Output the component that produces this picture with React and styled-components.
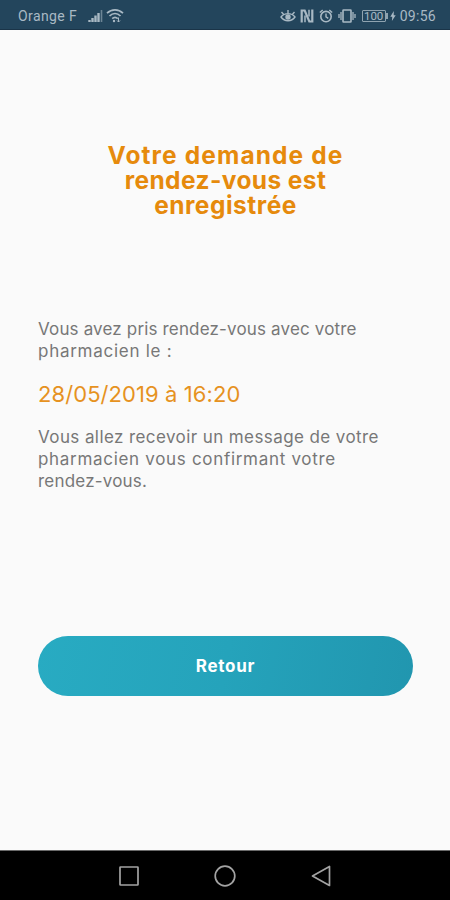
import React from 'react';
import styled, { createGlobalStyle } from 'styled-components';

const GlobalStyle = createGlobalStyle`
  * {
    box-sizing: border-box;
  }

  body {
    margin: 0;
    background: #fafafa;
  }
`;

const Screen = styled.div`
  display: flex;
  flex-direction: column;
  width: 450px;
  height: 900px;
  overflow: hidden;
  background: #fafafa;
  font-family: 'Inter', 'Open Sans', sans-serif;
`;

const StatusBar = styled.header`
  display: flex;
  align-items: center;
  justify-content: space-between;
  flex: none;
  height: 30px;
  padding: 2px 14px 0 18px;
  background: #23455c;
  border-bottom: 1px solid #1a3448;
  color: #a9b9c4;
  font-family: 'Roboto', sans-serif;
  font-size: 14px;
`;

const StatusGroup = styled.div`
  display: flex;
  align-items: center;
  height: 28px;
`;

const StatusText = styled.span`
  margin-left: ${(props) => props.$gap || '0'};
  line-height: 28px;
  letter-spacing: ${(props) => props.$spacing || '0'};
  white-space: nowrap;
`;

const StatusIcon = styled.svg`
  display: block;
  flex: none;
  margin-left: ${(props) => props.$gap || '0'};
  fill: none;
  stroke: currentColor;
  stroke-width: 1.4;
`;

const Battery = styled.span`
  display: flex;
  align-items: center;
  justify-content: center;
  position: relative;
  width: 24px;
  height: 12px;
  margin-left: 6px;
  border: 1px solid #8fa3b0;
  border-radius: 1px;
  font-size: 11.5px;
  line-height: 10px;

  &::after {
    content: '';
    position: absolute;
    top: 2px;
    right: -3px;
    width: 2px;
    height: 6px;
    background: #8fa3b0;
  }
`;

const Content = styled.main`
  flex: 1;
  display: flex;
  flex-direction: column;
  padding: 113px 37px 0 38px;
`;

const Title = styled.h1`
  margin: 0;
  color: #e68a0c;
  font-size: 24.5px;
  font-weight: 700;
  line-height: 25px;
  text-align: center;
`;

const Message = styled.p`
  margin: ${(props) => props.$top} 0 0;
  color: #777777;
  font-size: 17px;
  font-weight: 400;
  line-height: 21.7px;
`;

const Line = styled.span`
  display: block;
  letter-spacing: ${(props) => props.$spacing || '0'};
  white-space: nowrap;
`;

const Appointment = styled.p`
  margin: 18px 0 0;
  color: #e6921f;
  font-size: 22px;
  line-height: 28px;
`;

const BackButton = styled.button`
  flex: none;
  height: 60px;
  margin-top: 143px;
  padding: 1px 0 0;
  border: none;
  border-radius: 30px;
  background: linear-gradient(100deg, #28abc2 0%, #25a3bb 50%, #2196af 100%);
  color: #ffffff;
  font-family: inherit;
  font-size: 17px;
  font-weight: 700;
  letter-spacing: 0.7px;
`;

const NavBar = styled.nav`
  display: flex;
  align-items: center;
  justify-content: center;
  flex: none;
  gap: 72px;
  height: 50px;
  border-top: 1px solid #6a6a6a;
  background: #000000;
  color: #a3a3a3;
`;

const NavIcon = styled.svg`
  display: block;
  fill: none;
  stroke: currentColor;
  stroke-width: 1.7;
  stroke-linejoin: round;
`;

const SignalIcon = () => (
  <StatusIcon width="15" height="14" viewBox="0 0 15 14" $gap="11px">
    <path d="M1.5 11v2M4.5 9v4M7.5 6.5V13M10.5 4v9" strokeWidth="2.4" />
    <path d="M13.5 1v12" strokeWidth="1.6" opacity="0.55" />
  </StatusIcon>
);

const WifiIcon = () => (
  <StatusIcon width="18" height="15" viewBox="0 0 18 15" $gap="3px">
    <path
      d="M1 5.2C5.6.7 12.4.7 17 5.2M3.5 8c3.3-3.2 7.7-3.2 11 0M6.2 10.6c1.7-1.6 3.9-1.6 5.6 0"
      strokeWidth="1.7"
    />
    <circle cx="8" cy="13" r="1.2" fill="currentColor" stroke="none" />
    <path d="M12.5 9.5v4.5M11 12.5l1.5 1.5 1.5-1.5" strokeWidth="1" />
  </StatusIcon>
);

const EyeIcon = () => (
  <StatusIcon width="16" height="14" viewBox="0 0 16 14">
    <path d="M1 8c3.5-4.5 10.5-4.5 14 0-3.5 5-10.5 5-14 0zM8 4.5V1M3.5 5.2 1.5 3M12.5 5.2l2-2.2" />
    <circle cx="8" cy="8" r="2" fill="currentColor" />
  </StatusIcon>
);

const NfcIcon = () => (
  <StatusIcon width="14" height="14" viewBox="0 0 14 14" $gap="4px">
    <path d="M1.7 13.5V1.5h3L9.3 12.5h3V.5" strokeWidth="2.2" />
    <path d="M5 6.5v6.7M9 .8v6.7" strokeWidth="1.5" />
  </StatusIcon>
);

const AlarmIcon = () => (
  <StatusIcon width="14" height="14" viewBox="0 0 14 14" $gap="5px">
    <circle cx="7" cy="7.6" r="5.2" strokeWidth="1.6" />
    <path d="M7 4.5v3.3l2.3 1.5M.8 3.6 3.7 1M13.2 3.6 10.3 1" />
  </StatusIcon>
);

const VibrateIcon = () => (
  <StatusIcon width="18" height="14" viewBox="0 0 18 14" $gap="5px">
    <rect x="5" y="1" width="8" height="12" rx="0.5" strokeWidth="1.6" />
    <path d="M3 3v8M15 3v8M1 5v4M17 5v4" strokeWidth="1.3" />
  </StatusIcon>
);

const ChargeIcon = () => (
  <StatusIcon width="6" height="10" viewBox="0 0 6 10" $gap="4px">
    <path d="M3.8 0 .3 5.7h2L1.9 10l3.8-5.8h-2z" fill="currentColor" stroke="none" />
  </StatusIcon>
);

export const AppointmentConfirmation = () => {
  return (
    <Screen>
      <StatusBar>
        <StatusGroup>
          <StatusText $spacing="0.4px">Orange F</StatusText>
          <SignalIcon />
          <WifiIcon />
        </StatusGroup>
        <StatusGroup>
          <EyeIcon />
          <NfcIcon />
          <AlarmIcon />
          <VibrateIcon />
          <Battery>100</Battery>
          <ChargeIcon />
          <StatusText $gap="4px" $spacing="0.3px">
            09:56
          </StatusText>
        </StatusGroup>
      </StatusBar>
      <Content>
        <Title>
          <Line $spacing="1.1px">Votre demande de</Line>
          <Line $spacing="0.4px">rendez-vous est</Line>
          <Line $spacing="0.5px">enregistrée</Line>
        </Title>
        <Message $top="101px">
          <Line $spacing="0.16px">Vous avez pris rendez-vous avec votre</Line>
          <Line $spacing="0.73px">pharmacien le :</Line>
        </Message>
        <Appointment>
          <Line $spacing="0.08px">28/05/2019 à 16:20</Line>
        </Appointment>
        <Message $top="19px">
          <Line $spacing="0.41px">Vous allez recevoir un message de votre</Line>
          <Line $spacing="0.69px">pharmacien vous confirmant votre</Line>
          <Line $spacing="0.2px">rendez-vous.</Line>
        </Message>
        <BackButton>Retour</BackButton>
      </Content>
      <NavBar>
        <NavIcon width="24" height="24" viewBox="0 0 24 24">
          <rect x="3" y="3" width="18" height="18" rx="0.5" />
        </NavIcon>
        <NavIcon width="24" height="24" viewBox="0 0 24 24">
          <circle cx="12" cy="12" r="9.8" />
        </NavIcon>
        <NavIcon width="24" height="24" viewBox="0 0 24 24">
          <path d="M20.5 2.5v19L3.5 12z" />
        </NavIcon>
      </NavBar>
    </Screen>
  );
};

const App = () => (
  <>
    <GlobalStyle />
    <AppointmentConfirmation />
  </>
);

export default App;
